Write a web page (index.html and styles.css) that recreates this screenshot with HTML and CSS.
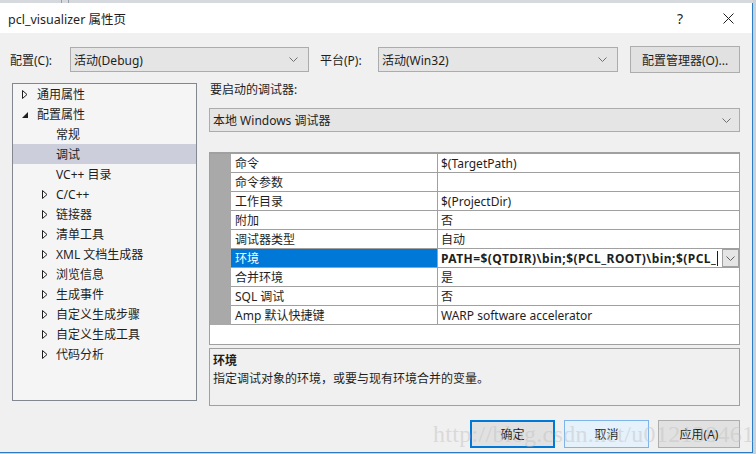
FILE: index.html
```html
<!DOCTYPE html>
<html lang="zh-CN">
<head>
<meta charset="utf-8">
<title>pcl_visualizer 属性页</title>
<link rel="stylesheet" href="styles.css">
</head>
<body>
<div class="screen">
  <div class="backdrop-strip"><span class="bd-line l1"></span><span class="bd-line l2"></span></div>
  <div class="window">
    <div class="titlebar">
      <span class="title">pcl_visualizer 属性页</span>
      <span class="help">?</span>
      <span class="close"><svg width="11" height="11" viewBox="0 0 11 11"><path d="M0.5 0.5 L10.5 10.5 M10.5 0.5 L0.5 10.5" stroke="#1e1e1e" stroke-width="1" fill="none"/></svg></span>
    </div>
    <div class="body">
      <div class="config-row">
        <span class="lbl lbl-config">配置(C):</span>
        <div class="combo combo-config"><span>活动(Debug)</span><svg class="chev" width="9" height="5" viewBox="0 0 9 5"><path d="M0.5 0.5 L4.5 4.5 L8.5 0.5" stroke="#707070" fill="none"/></svg></div>
        <span class="lbl lbl-plat">平台(P):</span>
        <div class="combo combo-plat"><span>活动(Win32)</span><svg class="chev" width="9" height="5" viewBox="0 0 9 5"><path d="M0.5 0.5 L4.5 4.5 L8.5 0.5" stroke="#707070" fill="none"/></svg></div>
        <button class="btn btn-mgr">配置管理器(O)...</button>
      </div>
      <div class="main">
        <div class="tree">
          <div class="node lv0"><svg class="arr" width="6" height="9" viewBox="0 0 6 9"><path d="M0.5 0.5 L5 4.5 L0.5 8.5 Z" fill="none" stroke="#1e1e1e"/></svg><span>通用属性</span></div>
          <div class="node lv0"><svg class="arr" width="6" height="9" viewBox="0 0 6 9"><path d="M6 2 L6 8 L0 8 Z" fill="#1e1e1e"/></svg><span>配置属性</span></div>
          <div class="node lv1 leaf"><span>常规</span></div>
          <div class="node lv1 leaf selected"><span>调试</span></div>
          <div class="node lv1 leaf"><span>VC++ 目录</span></div>
          <div class="node lv1"><svg class="arr" width="6" height="9" viewBox="0 0 6 9"><path d="M0.5 0.5 L5 4.5 L0.5 8.5 Z" fill="none" stroke="#1e1e1e"/></svg><span>C/C++</span></div>
          <div class="node lv1"><svg class="arr" width="6" height="9" viewBox="0 0 6 9"><path d="M0.5 0.5 L5 4.5 L0.5 8.5 Z" fill="none" stroke="#1e1e1e"/></svg><span>链接器</span></div>
          <div class="node lv1"><svg class="arr" width="6" height="9" viewBox="0 0 6 9"><path d="M0.5 0.5 L5 4.5 L0.5 8.5 Z" fill="none" stroke="#1e1e1e"/></svg><span>清单工具</span></div>
          <div class="node lv1"><svg class="arr" width="6" height="9" viewBox="0 0 6 9"><path d="M0.5 0.5 L5 4.5 L0.5 8.5 Z" fill="none" stroke="#1e1e1e"/></svg><span>XML 文档生成器</span></div>
          <div class="node lv1"><svg class="arr" width="6" height="9" viewBox="0 0 6 9"><path d="M0.5 0.5 L5 4.5 L0.5 8.5 Z" fill="none" stroke="#1e1e1e"/></svg><span>浏览信息</span></div>
          <div class="node lv1"><svg class="arr" width="6" height="9" viewBox="0 0 6 9"><path d="M0.5 0.5 L5 4.5 L0.5 8.5 Z" fill="none" stroke="#1e1e1e"/></svg><span>生成事件</span></div>
          <div class="node lv1"><svg class="arr" width="6" height="9" viewBox="0 0 6 9"><path d="M0.5 0.5 L5 4.5 L0.5 8.5 Z" fill="none" stroke="#1e1e1e"/></svg><span>自定义生成步骤</span></div>
          <div class="node lv1"><svg class="arr" width="6" height="9" viewBox="0 0 6 9"><path d="M0.5 0.5 L5 4.5 L0.5 8.5 Z" fill="none" stroke="#1e1e1e"/></svg><span>自定义生成工具</span></div>
          <div class="node lv1"><svg class="arr" width="6" height="9" viewBox="0 0 6 9"><path d="M0.5 0.5 L5 4.5 L0.5 8.5 Z" fill="none" stroke="#1e1e1e"/></svg><span>代码分析</span></div>
        </div>
        <div class="panel">
          <div class="panel-label">要启动的调试器:</div>
          <div class="combo combo-debugger"><span>本地 Windows 调试器</span><svg class="chev" width="9" height="5" viewBox="0 0 9 5"><path d="M0.5 0.5 L4.5 4.5 L8.5 0.5" stroke="#707070" fill="none"/></svg></div>
          <div class="pgrid">
            <div class="prow"><div class="gut"></div><div class="pname">命令</div><div class="pval">$(TargetPath)</div></div>
            <div class="prow"><div class="gut"></div><div class="pname">命令参数</div><div class="pval"></div></div>
            <div class="prow"><div class="gut"></div><div class="pname">工作目录</div><div class="pval">$(ProjectDir)</div></div>
            <div class="prow"><div class="gut"></div><div class="pname">附加</div><div class="pval">否</div></div>
            <div class="prow"><div class="gut"></div><div class="pname">调试器类型</div><div class="pval">自动</div></div>
            <div class="prow sel"><div class="gut"></div><div class="pname">环境</div><div class="pval"><span class="pval-text">PATH=$(QTDIR)\bin;$(PCL_ROOT)\bin;$(PCL_</span><span class="caret"></span><span class="dd-btn"><svg width="9" height="5" viewBox="0 0 9 5"><path d="M0.5 0.5 L4.5 4.5 L8.5 0.5" stroke="#606060" fill="none"/></svg></span></div></div>
            <div class="prow"><div class="gut"></div><div class="pname">合并环境</div><div class="pval">是</div></div>
            <div class="prow"><div class="gut"></div><div class="pname">SQL 调试</div><div class="pval">否</div></div>
            <div class="prow"><div class="gut"></div><div class="pname">Amp 默认快捷键</div><div class="pval">WARP software accelerator</div></div>
            <div class="pgrid-fill"></div>
          </div>
          <div class="desc">
            <div class="desc-title">环境</div>
            <div class="desc-text">指定调试对象的环境，或要与现有环境合并的变量。</div>
          </div>
        </div>
      </div>
      <div class="footer">
        <button class="btn btn-ok">确定</button>
        <button class="btn btn-cancel">取消</button>
        <button class="btn btn-apply">应用(A)</button>
      </div>
    </div>
  </div>
  <div class="watermark">http://blog.csdn.net/u012138461</div>
</div>
</body>
</html>
```
FILE: styles.css
```css
* { box-sizing: border-box; }
html, body { margin: 0; padding: 0; }
body {
  width: 756px;
  height: 454px;
  overflow: hidden;
  background: #c9d3dc;
  font-family: "Noto Sans", "Noto Sans CJK SC", sans-serif;
  font-size: 12px;
  color: #1e1e1e;
}
.screen { position: relative; width: 756px; height: 454px; }

.backdrop-strip {
  height: 3px;
  width: 753px;
  background: #d6d9de;
  display: flex;
}
.bd-line { width: 1px; height: 3px; background: #9aa0a8; }
.bd-line.l1 { margin-left: 61px; }
.bd-line.l2 { margin-left: 6px; }

.window {
  width: 753px;
  height: 450px;
  border-right: 1px solid #2a7cc7;
  border-bottom: 1px solid #2a7cc7;
  background: #f0f0f0;
  display: flex;
  flex-direction: column;
}

.titlebar {
  height: 30px;
  background: #ffffff;
  display: flex;
  align-items: center;
  padding-left: 8px;
}
.title { font-size: 12.5px; flex: 1; }
.help { width: 12px; font-size: 14px; margin-right: 34px; }
.close { width: 11px; height: 11px; margin-right: 18px; display: flex; }

.body { flex: 1; display: flex; flex-direction: column; padding-top: 13px; }

.config-row {
  height: 27px;
  display: flex;
  align-items: center;
}
.lbl { white-space: nowrap; }
.lbl-config { margin-left: 10px; width: 60px; }
.lbl-plat { margin-left: 11px; width: 58px; }

.combo {
  height: 25px;
  background: #e5e5e5;
  border: 1px solid #acacac;
  display: flex;
  align-items: center;
  justify-content: space-between;
  padding: 0 10px 0 3px;
}
.combo-config { width: 239px; }
.combo-plat { width: 240px; }
.chev { display: block; }

.btn {
  font-family: inherit;
  font-size: 12px;
  color: #1e1e1e;
  background: #e1e1e1;
  border: 1px solid #adadad;
  padding: 0;
  margin: 0;
}
.btn-mgr { width: 110px; height: 27px; margin-left: 12px; }

.main {
  margin-top: 10px;
  display: flex;
  align-items: flex-start;
}

.tree {
  margin-left: 12px;
  width: 185px;
  height: 318px;
  border: 1px solid #828790;
  background: #f5f5f5;
  padding-top: 0;
}
.node {
  height: 20px;
  display: flex;
  align-items: center;
  white-space: nowrap;
}
.node .arr { display: block; flex: none; }
.node.lv0 { padding-left: 9px; }
.node.lv0 .arr { margin-right: 9px; }
.node.lv1 { padding-left: 29px; }
.node.lv1 .arr { margin-right: 8px; }
.node.leaf { padding-left: 43px; }
.node.selected { background: #cccedb; }

.panel {
  margin-left: 12px;
  width: 531px;
  display: flex;
  flex-direction: column;
}
.panel-label { height: 14px; line-height: 14px; padding-left: 1px; }
.combo-debugger { margin-top: 11px; height: 24px; width: 531px; padding-right: 8px; }

.pgrid {
  margin-top: 20px;
  height: 193px;
  border: 1px solid #a0a0a0;
  border-top-width: 2px;
  background: #ffffff;
  display: flex;
  flex-direction: column;
}
.prow { display: flex; height: 19px; }
.gut { width: 21px; background: #a9a9a9; flex: none; }
.pname {
  width: 207px;
  flex: none;
  border-right: 1px solid #a0a0a0;
  border-bottom: 1px solid #a0a0a0;
  padding-left: 4px;
  display: flex;
  align-items: center;
  white-space: nowrap;
}
.pval {
  flex: 1;
  min-width: 0;
  border-bottom: 1px solid #a0a0a0;
  padding-left: 3px;
  display: flex;
  align-items: center;
  white-space: nowrap;
  overflow: hidden;
}
.prow.sel .pname { background: #0078d7; color: #ffffff; }
.pval-text { font-weight: bold; letter-spacing: 0.45px; white-space: nowrap; flex: 0 1 auto; min-width: 0; overflow: hidden; }
.caret { width: 1px; height: 15px; background: #1e1e1e; flex: none; margin-left: 1px; }
.dd-btn {
  margin-left: auto;
  width: 17px;
  height: 18px;
  flex: none;
  background: #e5e5e5;
  border: 1px solid #a0a0a0;
  display: flex;
  align-items: center;
  justify-content: center;
}
.pgrid-fill { flex: 1; }

.desc {
  margin-top: 3px;
  height: 58px;
  border: 1px solid #a0a0a0;
  background: #f0f0f0;
  padding: 4px 3px;
}
.desc-title { font-weight: bold; height: 16px; line-height: 16px; }
.desc-text { height: 18px; line-height: 18px; margin-top: 1px; }

.footer {
  margin-top: 14px;
  display: flex;
  justify-content: flex-end;
  padding-right: 12px;
  gap: 9px;
}
.footer .btn { width: 85px; height: 28px; }
.footer .btn-apply { width: 82px; }
.btn-ok { border: 2px solid #0078d7; }
.btn-cancel { background: #e5f1fb; border-color: #7eb4ea; }
.btn-apply { background: #e1e1e1; }

.watermark {
  position: absolute;
  left: 433px;
  top: 421px;
  font-family: "Liberation Serif", serif;
  font-size: 24px;
  letter-spacing: 0.3px;
  color: rgba(195, 195, 195, 0.5);
  white-space: nowrap;
  pointer-events: none;
}
```
